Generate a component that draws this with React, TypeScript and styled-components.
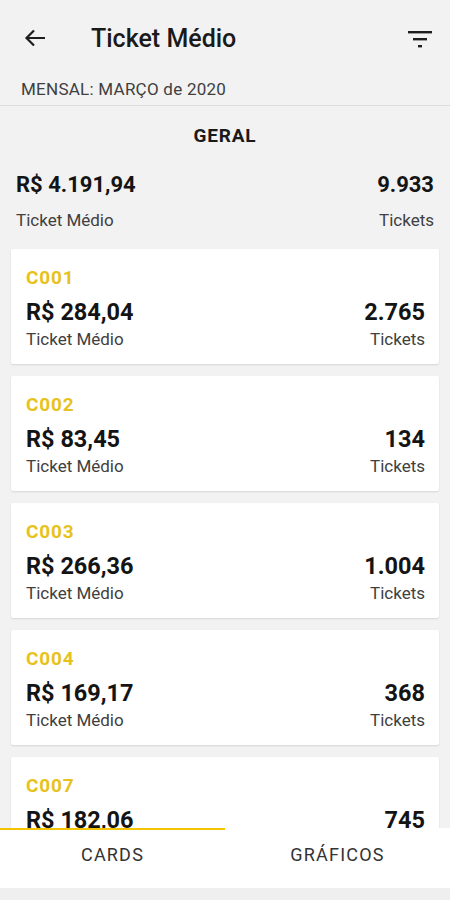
import React from 'react';
import styled, { createGlobalStyle } from 'styled-components';

const GlobalStyle = createGlobalStyle`
    html, body {
        margin: 0;
        padding: 0;
        background: #f2f2f2;
    }

    body {
        font-family: Roboto, "Liberation Sans", sans-serif;
        color: #1e1e1e;
    }
`;

const Screen = styled.div`
    width: 450px;
    height: 900px;
    display: flex;
    flex-direction: column;
    background: #f2f2f2;
    overflow: hidden;
`;

const Header = styled.div`
    height: 76px;
    display: flex;
    align-items: center;
    padding: 0 17px 0 23px;
    flex-shrink: 0;
`;

const Title = styled.div`
    flex: 1;
    margin-left: 44px;
    font-size: 25px;
    font-weight: 500;
    color: #1a1a1a;
`;

const IconButton = styled.div`
    display: flex;
    align-items: center;
    justify-content: center;
`;

const Period = styled.div`
    height: 30px;
    padding: 3px 0 0 21px;
    box-sizing: border-box;
    font-size: 17px;
    line-height: 20px;
    letter-spacing: 0.25px;
    color: #404040;
    border-bottom: 1px solid #dcdcdc;
    flex-shrink: 0;
`;

const Content = styled.div`
    flex: 1;
    overflow: hidden;
    padding: 0 11px;
`;

const SectionTitle = styled.div`
    padding-top: 19px;
    text-align: center;
    font-size: 19px;
    font-weight: 700;
    line-height: 22px;
    letter-spacing: 0.8px;
    color: #1a1a1a;
`;

const Summary = styled.div`
    padding: 24px 5px 0 5px;
    margin-bottom: 19px;
`;

const Row = styled.div`
    display: flex;
    justify-content: space-between;
    align-items: baseline;
`;

const Value = styled.div<{ $size: number }>`
    font-size: ${p => p.$size}px;
    font-weight: 700;
    line-height: 28px;
    color: #141414;
`;

const Label = styled.div<{ $gap: number }>`
    margin-top: ${p => p.$gap}px;
    font-size: 17px;
    line-height: 20px;
    color: #404040;
`;

const CardList = styled.div`
    display: flex;
    flex-direction: column;
    gap: 12px;
`;

const Card = styled.div`
    background: #ffffff;
    border-radius: 2px;
    box-shadow: 0 1px 2px rgba(0, 0, 0, 0.12);
    padding: 18px 14px 15px 15px;
`;

const Code = styled.div`
    font-size: 19px;
    font-weight: 700;
    line-height: 22px;
    letter-spacing: 0.8px;
    color: #e8c21c;
    margin-bottom: 9px;
`;

const TabBar = styled.div`
    height: 60px;
    display: flex;
    background: #ffffff;
    flex-shrink: 0;
`;

const Tab = styled.div<{ $active?: boolean }>`
    flex: 1;
    display: flex;
    align-items: center;
    justify-content: center;
    font-size: 18px;
    letter-spacing: 1.2px;
    color: #333333;
    border-top: 2px solid ${p => (p.$active ? '#f2c500' : 'transparent')};
    padding-bottom: 9px;
`;

const BottomStrip = styled.div`
    height: 12px;
    background: #efefef;
    flex-shrink: 0;
`;

interface Store {
    code: string;
    ticket: string;
    count: string;
}

const stores: Store[] = [
    { code: 'C001', ticket: 'R$ 284,04', count: '2.765' },
    { code: 'C002', ticket: 'R$ 83,45', count: '134' },
    { code: 'C003', ticket: 'R$ 266,36', count: '1.004' },
    { code: 'C004', ticket: 'R$ 169,17', count: '368' },
    { code: 'C007', ticket: 'R$ 182,06', count: '745' },
];

function BackIcon() {
    return (
        <svg width="24" height="20" viewBox="0 0 24 20">
            <path d="M22 10H3.5 M11 2.5L3.5 10l7.5 7.5" fill="none" stroke="#1e1e1e" strokeWidth="2.2" />
        </svg>
    );
}

function FilterIcon() {
    return (
        <svg width="26" height="20" viewBox="0 0 26 20">
            <rect x="1" y="3" width="24" height="2.4" fill="#1e1e1e" />
            <rect x="6" y="10" width="14" height="2.4" fill="#1e1e1e" />
            <rect x="11" y="17" width="4" height="2.4" fill="#1e1e1e" />
        </svg>
    );
}

function StoreCard({ code, ticket, count }: Store) {
    return (
        <Card>
            <Code>{code}</Code>
            <Row>
                <Value $size={23.5}>{ticket}</Value>
                <Value $size={23.5}>{count}</Value>
            </Row>
            <Row>
                <Label $gap={3}>Ticket Médio</Label>
                <Label $gap={3}>Tickets</Label>
            </Row>
        </Card>
    );
}

function App() {
    return (
        <Screen>
            <GlobalStyle />
            <Header>
                <IconButton>
                    <BackIcon />
                </IconButton>
                <Title>Ticket Médio</Title>
                <IconButton>
                    <FilterIcon />
                </IconButton>
            </Header>
            <Period>MENSAL: MARÇO de 2020</Period>
            <Content>
                <SectionTitle>GERAL</SectionTitle>
                <Summary>
                    <Row>
                        <Value $size={22}>R$ 4.191,94</Value>
                        <Value $size={22}>9.933</Value>
                    </Row>
                    <Row>
                        <Label $gap={11}>Ticket Médio</Label>
                        <Label $gap={11}>Tickets</Label>
                    </Row>
                </Summary>
                <CardList>
                    {stores.map(store =>
                        <StoreCard
                            key={store.code}
                            code={store.code}
                            ticket={store.ticket}
                            count={store.count}
                        />
                    )}
                </CardList>
            </Content>
            <TabBar>
                <Tab $active>CARDS</Tab>
                <Tab>GRÁFICOS</Tab>
            </TabBar>
            <BottomStrip />
        </Screen>
    );
}

export default App;
